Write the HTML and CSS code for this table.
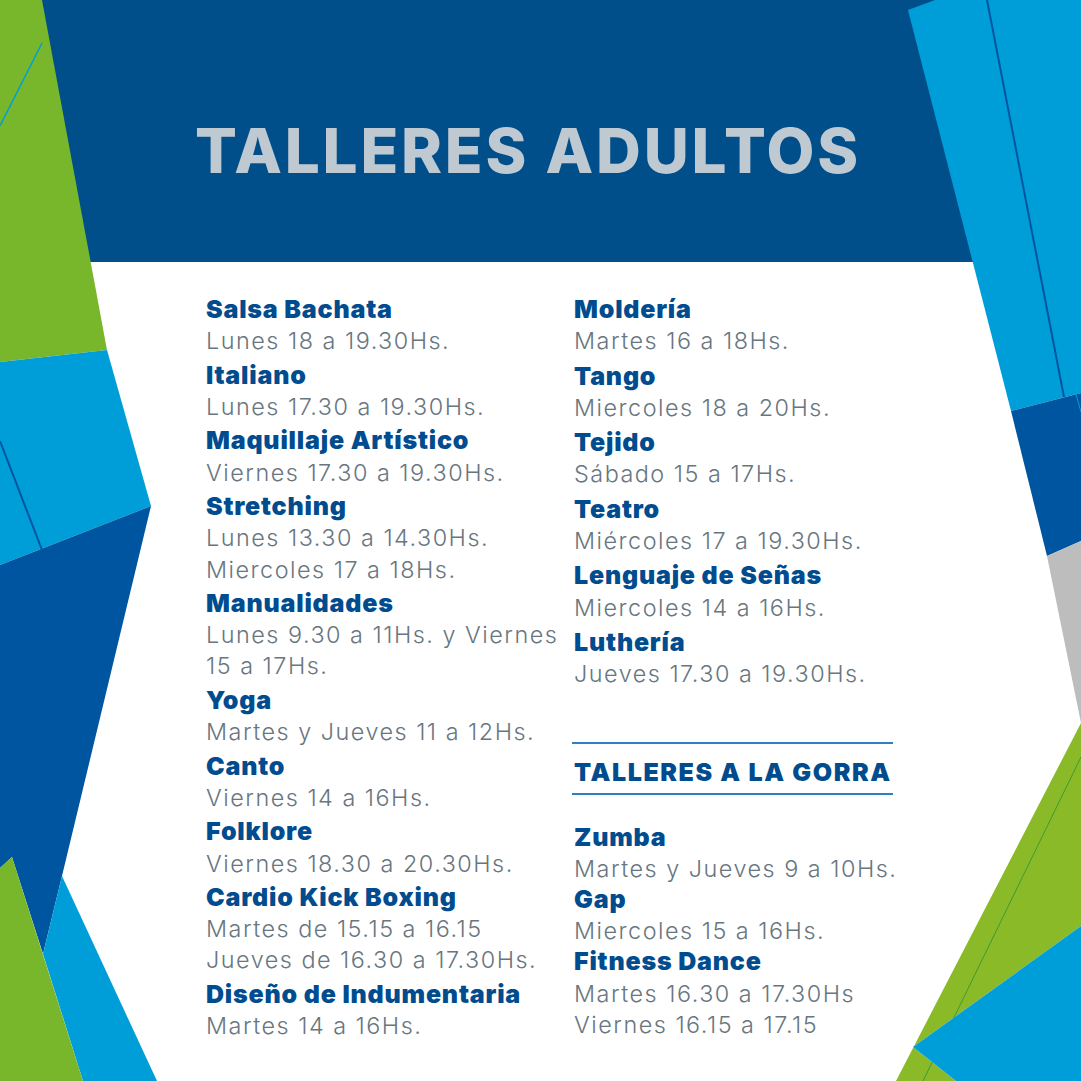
FILE: index.html
```html
<!DOCTYPE html>
<html lang="es">
<head>
<meta charset="utf-8">
<title>Talleres Adultos</title>
<link rel="stylesheet" href="styles.css">
</head>
<body>
<div class="page">
  <svg class="bg" viewBox="0 0 1081 1081" width="1081" height="1081" aria-hidden="true">
    <rect x="0" y="0" width="1081" height="262" fill="#004f8b"/>
    <!-- left side -->
    <polygon points="0,0 42,0 107,350 0,362" fill="#78b72b"/>
    <line x1="42" y1="43" x2="0" y2="126" stroke="#009ed9" stroke-width="1.5"/>
    <polygon points="0,362 107,350 151,506 0,565" fill="#009ed9"/>
    <line x1="0" y1="441" x2="42" y2="550" stroke="#0055a1" stroke-width="2"/>
    <polygon points="0,565 151,506 62,876 43,954 12,857 0,868" fill="#0055a1"/>
    <polygon points="62,876 157,1081 83,1081 43,954" fill="#009ed9"/>
    <polygon points="0,868 12,857 83,1081 0,1081" fill="#78b72b"/>
    <!-- right side -->
    <polygon points="908,10 935,0 1081,0 1081,393 1011,411" fill="#009ed9"/>
    <line x1="987" y1="0" x2="1064" y2="397" stroke="#0055a1" stroke-width="2"/>
    <polygon points="1011,411 1081,393 1081,541 1047,556" fill="#0055a1"/>
    <line x1="1076" y1="394" x2="1081" y2="412" stroke="#009ed9" stroke-width="1"/>
    <polygon points="1047,556 1081,541 1081,723" fill="#bdbdbd"/>
    <polygon points="1081,723 1081,926 913,1047 956,1081 896,1081" fill="#8aba27"/>
    <line x1="1081" y1="757" x2="923" y2="1081" stroke="#3d9b35" stroke-width="1"/>
    <polygon points="1081,926 913,1047 956,1081 1081,1081" fill="#009ed9"/>
  </svg>

  <header class="header">
    <h1 class="title">TALLERES ADULTOS</h1>
  </header>

  <main class="content">
    <section class="col col-a">
      <div class="entry"><h2 class="name">Salsa Bachata</h2><p class="time">Lunes 18 a 19.30Hs.</p></div>
      <div class="entry"><h2 class="name">Italiano</h2><p class="time">Lunes 17.30 a 19.30Hs.</p></div>
      <div class="entry"><h2 class="name">Maquillaje Artístico</h2><p class="time">Viernes 17.30 a 19.30Hs.</p></div>
      <div class="entry"><h2 class="name">Stretching</h2><p class="time">Lunes 13.30 a 14.30Hs.</p><p class="time">Miercoles 17 a 18Hs.</p></div>
      <div class="entry"><h2 class="name">Manualidades</h2><p class="time">Lunes 9.30 a 11Hs. y Viernes</p><p class="time">15 a 17Hs.</p></div>
      <div class="entry"><h2 class="name">Yoga</h2><p class="time">Martes y Jueves 11 a 12Hs.</p></div>
      <div class="entry"><h2 class="name">Canto</h2><p class="time">Viernes 14 a 16Hs.</p></div>
      <div class="entry"><h2 class="name">Folklore</h2><p class="time">Viernes 18.30 a 20.30Hs.</p></div>
      <div class="entry"><h2 class="name">Cardio Kick Boxing</h2><p class="time">Martes de 15.15 a 16.15</p><p class="time">Jueves de 16.30 a 17.30Hs.</p></div>
      <div class="entry"><h2 class="name">Diseño de Indumentaria</h2><p class="time">Martes 14 a 16Hs.</p></div>
    </section>

    <section class="col col-b">
      <div class="entry"><h2 class="name">Moldería</h2><p class="time">Martes 16 a 18Hs.</p></div>
      <div class="entry"><h2 class="name">Tango</h2><p class="time">Miercoles 18 a 20Hs.</p></div>
      <div class="entry"><h2 class="name">Tejido</h2><p class="time">Sábado 15 a 17Hs.</p></div>
      <div class="entry"><h2 class="name">Teatro</h2><p class="time">Miércoles 17 a 19.30Hs.</p></div>
      <div class="entry"><h2 class="name">Lenguaje de Señas</h2><p class="time">Miercoles 14 a 16Hs.</p></div>
      <div class="entry"><h2 class="name">Luthería</h2><p class="time">Jueves 17.30 a 19.30Hs.</p></div>

      <div class="gorra">
        <h2 class="gorra-title">TALLERES A LA GORRA</h2>
      </div>

      <div class="gorra-list">
        <h2 class="name">Zumba</h2><p class="time">Martes y Jueves 9 a 10Hs.</p>
        <h2 class="name">Gap</h2><p class="time">Miercoles 15 a 16Hs.</p>
        <h2 class="name">Fitness Dance</h2><p class="time">Martes 16.30 a 17.30Hs</p><p class="time">Viernes 16.15 a 17.15</p>
      </div>
    </section>
  </main>
</div>
</body>
</html>
```

FILE: styles.css
```css
* { box-sizing: border-box; }

html, body {
  margin: 0;
  padding: 0;
  background: #ffffff;
}

.page {
  position: relative;
  width: 1081px;
  height: 1081px;
  overflow: hidden;
  background: #ffffff;
  font-family: Inter, "Liberation Sans", sans-serif;
}

.bg {
  position: absolute;
  left: 0;
  top: 0;
  z-index: 0;
  display: block;
}

.header {
  position: relative;
  z-index: 1;
  height: 262px;
  padding: 119.5px 0 0 195px;
}

.title {
  margin: 0;
  font-size: 62px;
  line-height: 1;
  font-weight: 800;
  color: #bfc9d1;
  letter-spacing: 2.8px;
  white-space: nowrap;
}

.content {
  position: relative;
  z-index: 1;
  display: grid;
  grid-template-columns: 368px 340px;
  padding: 32px 0 0 206px;
}

.entry + .entry {
  margin-top: 3.3px;
}

.col-b .entry + .entry {
  margin-top: 4.2px;
}

.name {
  margin: 0;
  font-size: 25px;
  line-height: 31.2px;
  font-weight: 900;
  color: #004c8e;
  letter-spacing: 0.8px;
  white-space: nowrap;
}

.time {
  margin: 0;
  font-size: 23.4px;
  line-height: 31.2px;
  font-weight: 350;
  color: #687680;
  letter-spacing: 1.5px;
  white-space: nowrap;
}

.gorra {
  margin: 53px 0 0 -2px;
  width: 321px;
  border-top: 2px solid #2f7fc4;
  border-bottom: 2px solid #2f7fc4;
  padding: 13px 0 4px 2px;
}

.gorra-title {
  margin: 0;
  font-size: 25px;
  line-height: 31.2px;
  font-weight: 900;
  color: #004c8e;
  letter-spacing: 1.6px;
  white-space: nowrap;
}

.gorra-list {
  margin-top: 27px;
}
```
